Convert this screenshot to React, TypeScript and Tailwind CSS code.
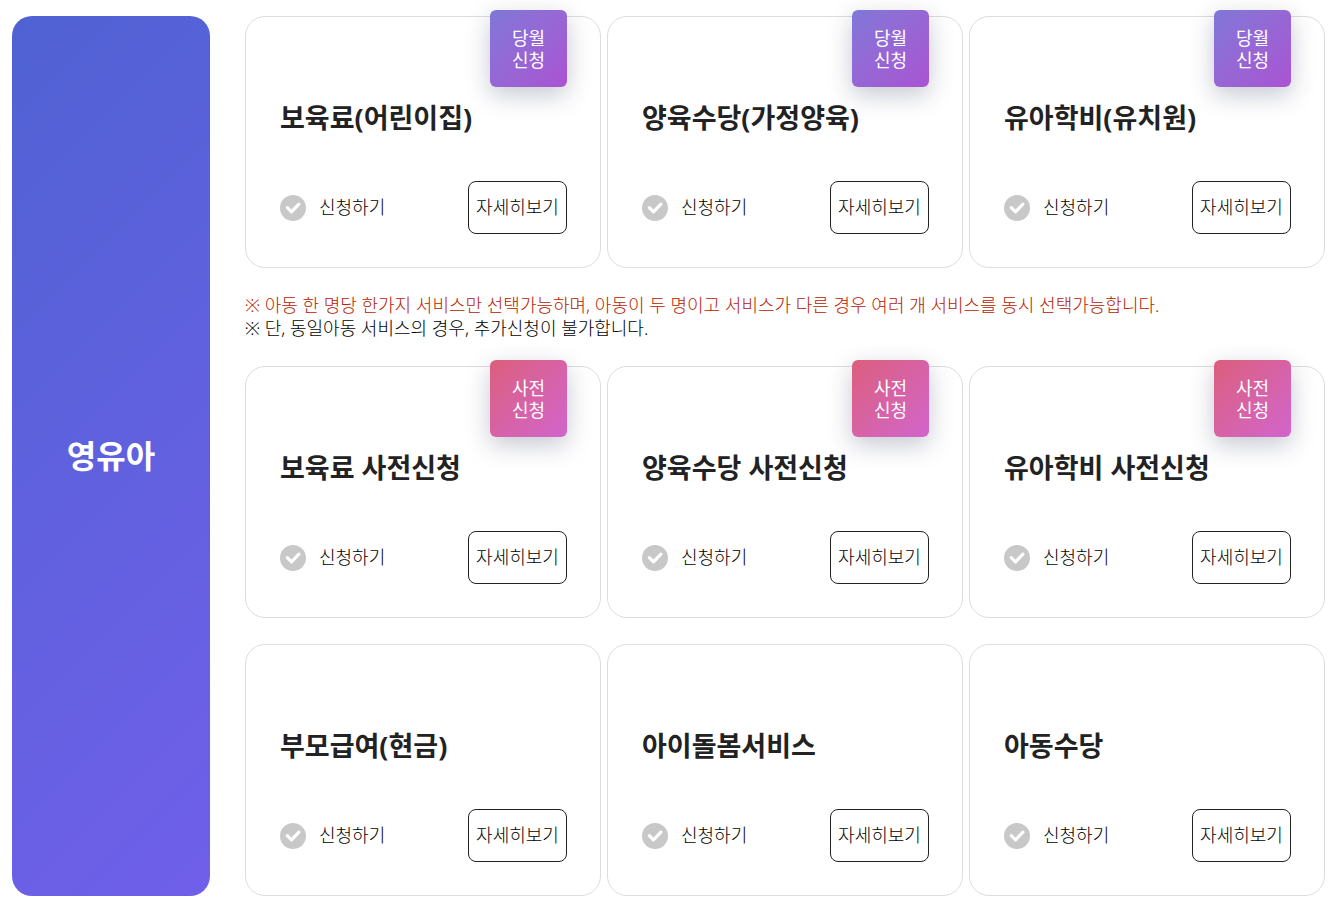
import React, { useState } from 'react';

type Badge = 'current' | 'advance';

type Service = {
  id: string;
  title: string;
  badge?: Badge;
};

const currentServices: Service[] = [
  { id: 'childcare', title: '보육료(어린이집)', badge: 'current' },
  { id: 'homecare', title: '양육수당(가정양육)', badge: 'current' },
  { id: 'kindergarten', title: '유아학비(유치원)', badge: 'current' },
];

const otherServices: Service[] = [
  { id: 'childcare-advance', title: '보육료 사전신청', badge: 'advance' },
  { id: 'homecare-advance', title: '양육수당 사전신청', badge: 'advance' },
  { id: 'kindergarten-advance', title: '유아학비 사전신청', badge: 'advance' },
  { id: 'parent-benefit', title: '부모급여(현금)' },
  { id: 'babysitting', title: '아이돌봄서비스' },
  { id: 'child-allowance', title: '아동수당' },
];

const badgeText = { current: '당월 신청', advance: '사전 신청' };

const badgeColor = {
  current: 'bg-linear-135 from-[#8077d8] to-[#a953d2]',
  advance: 'bg-linear-135 from-[#dc5e7c] to-[#d264cc]',
};

type CardProps = {
  service: Service;
  checked: boolean;
  onToggle: (id: string) => void;
};

function ServiceCard({ service, checked, onToggle }: CardProps) {
  return (
    <li className="relative rounded-[20px] border border-[#dddddd] bg-white pt-20 pr-[33px] pb-[33px] pl-[34px]">
      {service.badge && (
        <span
          className={`absolute -top-[7px] right-[33px] w-[77px] rounded-md px-5 pt-[17px] pb-4 text-center leading-[22px] font-normal break-keep text-white shadow-[0_8px_24px_rgba(30,40,80,0.25)] ${badgeColor[service.badge]}`}
        >
          {badgeText[service.badge]}
        </span>
      )}
      <h3 className="text-[27px] leading-[42px] font-bold whitespace-nowrap text-[#222222]">{service.title}</h3>
      <div className="mt-[42px] flex items-center justify-between">
        <label htmlFor={service.id} className="flex cursor-pointer items-center gap-[13px]">
          <span className="relative h-[26px] w-[26px]">
            <input
              id={service.id}
              type="checkbox"
              checked={checked}
              onChange={() => onToggle(service.id)}
              className="block h-[26px] w-[26px] cursor-pointer appearance-none rounded-full bg-[#c8c8c8] checked:bg-[#5b61dc]"
            />
            <svg viewBox="0 0 26 26" className="pointer-events-none absolute inset-0" fill="none" aria-hidden="true">
              <path d="M7.3 12.6l4.2 4.2 7.4-7.6" stroke="white" strokeWidth="3.2" strokeLinecap="round" strokeLinejoin="round" />
            </svg>
          </span>
          신청하기
        </label>
        <button
          type="button"
          className="h-[53px] w-[99px] cursor-pointer rounded-lg border border-[#222222] bg-white whitespace-nowrap"
        >
          자세히보기
        </button>
      </div>
    </li>
  );
}

export default function App() {
  const [selected, setSelected] = useState<string[]>([]);

  const toggle = (id: string) => {
    setSelected(prev => (prev.includes(id) ? prev.filter(item => item !== id) : [...prev, id]));
  };

  const renderCards = (services: Service[]) =>
    services.map(service => (
      <ServiceCard
        key={service.id}
        service={service}
        checked={selected.includes(service.id)}
        onToggle={toggle}
      />
    ));

  return (
    <section className="flex gap-[35px] bg-white py-4 pr-[15px] pl-3 font-['Noto_Sans','Noto_Sans_CJK_KR',sans-serif] text-[18px] leading-[23px] font-light text-black">
      <h2 className="flex w-[198px] shrink-0 items-center justify-center rounded-[20px] bg-linear-135 from-[#4f62d3] to-[#705fea] text-[32px] leading-10 font-bold text-white">
        영유아
      </h2>
      <div className="min-w-0 flex-1">
        <ul className="grid grid-cols-3 gap-x-1.5">{renderCards(currentServices)}</ul>
        <div className="my-[26px]">
          <p className="text-[#b82000]">
            ※ 아동 한 명당 한가지 서비스만 선택가능하며, 아동이 두 명이고 서비스가 다른 경우 여러 개 서비스를 동시 선택가능합니다.
          </p>
          <p>※ 단, 동일아동 서비스의 경우, 추가신청이 불가합니다.</p>
        </div>
        <ul className="grid grid-cols-3 gap-x-1.5 gap-y-[26px]">{renderCards(otherServices)}</ul>
      </div>
    </section>
  );
}
